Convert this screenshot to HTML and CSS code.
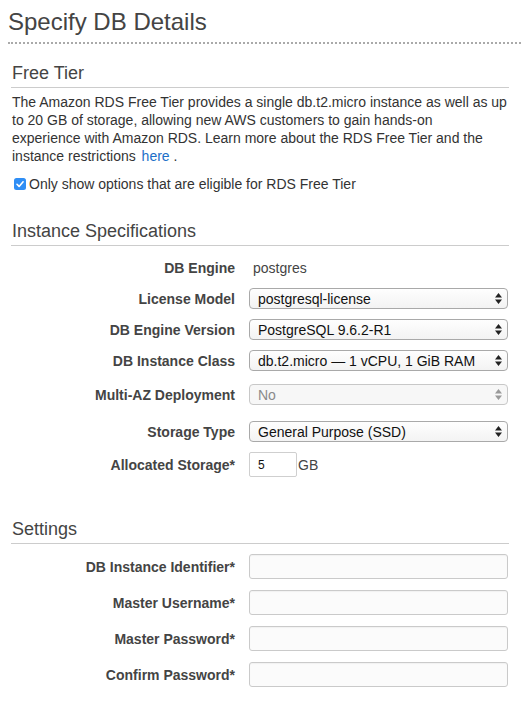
FILE: index.html
```html
<!DOCTYPE html>
<html>
<head>
<meta charset="utf-8">
<link rel="stylesheet" href="styles.css">
</head>
<body>
<h1 class="page-title">Specify DB Details</h1>

<section class="section">
  <h3 class="section-title first">Free Tier</h3>
  <p class="intro">The Amazon RDS Free Tier provides a single db.t2.micro instance as well as up<br>to 20 GB of storage, allowing new AWS customers to gain hands-on<br>experience with Amazon RDS. Learn more about the RDS Free Tier and the<br>instance restrictions <a class="link" href="#">here</a> .</p>
  <div class="check-line">
    <span class="checkbox"><svg width="12" height="12" viewBox="0 0 12 12"><rect x="0" y="0" width="12" height="12" rx="2.5" fill="#2f8ef5"/><path d="M3 6.3 L5.1 8.4 L9.1 3.8" fill="none" stroke="#fff" stroke-width="1.6" stroke-linecap="round" stroke-linejoin="round"/></svg></span>
    <span>Only show options that are eligible for RDS Free Tier</span>
  </div>

  <h3 class="section-title specs">Instance Specifications</h3>
  <div class="form">
    <div class="row row-text">
      <div class="label">DB Engine</div>
      <div class="value plain">postgres</div>
    </div>
    <div class="row">
      <div class="label">License Model</div>
      <div class="select"><span>postgresql-license</span><svg class="arrows" width="7" height="11" viewBox="0 0 7 11"><path d="M0 4.5 L3.5 0 L7 4.5 Z M0 6.5 L7 6.5 L3.5 11 Z" fill="#222"/></svg></div>
    </div>
    <div class="row">
      <div class="label">DB Engine Version</div>
      <div class="select"><span>PostgreSQL 9.6.2-R1</span><svg class="arrows" width="7" height="11" viewBox="0 0 7 11"><path d="M0 4.5 L3.5 0 L7 4.5 Z M0 6.5 L7 6.5 L3.5 11 Z" fill="#222"/></svg></div>
    </div>
    <div class="row">
      <div class="label">DB Instance Class</div>
      <div class="select"><span>db.t2.micro — 1 vCPU, 1 GiB RAM</span><svg class="arrows" width="7" height="11" viewBox="0 0 7 11"><path d="M0 4.5 L3.5 0 L7 4.5 Z M0 6.5 L7 6.5 L3.5 11 Z" fill="#222"/></svg></div>
    </div>
    <div class="row row-multi">
      <div class="label">Multi-AZ Deployment</div>
      <div class="select disabled"><span>No</span><svg class="arrows" width="7" height="11" viewBox="0 0 7 11"><path d="M0 4.5 L3.5 0 L7 4.5 Z M0 6.5 L7 6.5 L3.5 11 Z" fill="#9a9a9a"/></svg></div>
    </div>
    <div class="row row-type">
      <div class="label">Storage Type</div>
      <div class="select"><span>General Purpose (SSD)</span><svg class="arrows" width="7" height="11" viewBox="0 0 7 11"><path d="M0 4.5 L3.5 0 L7 4.5 Z M0 6.5 L7 6.5 L3.5 11 Z" fill="#222"/></svg></div>
    </div>
    <div class="row row-storage">
      <div class="label">Allocated Storage*</div>
      <div class="value"><span class="num-input">5</span><span class="unit">GB</span></div>
    </div>
  </div>

  <h3 class="section-title settings">Settings</h3>
  <div class="form form-settings">
    <div class="row row-input">
      <div class="label">DB Instance Identifier*</div>
      <div class="text-input"></div>
    </div>
    <div class="row row-input">
      <div class="label">Master Username*</div>
      <div class="text-input"></div>
    </div>
    <div class="row row-input">
      <div class="label">Master Password*</div>
      <div class="text-input"></div>
    </div>
    <div class="row row-input">
      <div class="label">Confirm Password*</div>
      <div class="text-input"></div>
    </div>
  </div>
</section>
</body>
</html>
```

FILE: styles.css
```css
html, body {
  margin: 0;
  padding: 0;
  background: #fff;
}
body {
  font-family: "Liberation Sans", Arial, Helvetica, sans-serif;
  font-size: 14px;
  color: #333;
}
.page-title {
  margin: 0 0 0 8px;
  padding: 8px 0 6px 0;
  font-size: 24px;
  line-height: 28px;
  font-weight: normal;
  color: #444;
  border-bottom: 2px dotted #aaa;
}
.section {
  width: 498px;
  margin-left: 11px;
}
.section-title {
  margin: 0;
  padding: 0 0 3px 1px;
  font-size: 18px;
  line-height: 22px;
  font-weight: normal;
  color: #444;
  border-bottom: 1px solid #ccc;
}
.section-title.first { margin-top: 18px; }
.section-title.specs { margin-top: 27px; }
.section-title.settings { margin-top: 41px; }
.intro {
  margin: 5px 0 0 1px;
  line-height: 18px;
  font-size: 14px;
  color: #333;
  white-space: nowrap;
}
.link {
  color: #1d6fc8;
  text-decoration: none;
  margin-left: 2px;
}
.check-line {
  margin-top: 10px;
  display: flex;
  align-items: center;
  height: 18px;
  padding-left: 3px;
  gap: 3px;
}
.checkbox {
  display: flex;
  width: 12px;
  height: 12px;
}
.form {
  margin-top: 12px;
  display: flex;
  flex-direction: column;
  gap: 10px;
}
.row {
  display: grid;
  grid-template-columns: 224px 259px;
  column-gap: 14px;
  align-items: center;
  height: 21px;
}
.row-text { height: 20px; }
.row-multi { margin-top: 3px; }
.row-type { margin-top: 6px; }
.row-storage { height: 25px; }
.label {
  text-align: right;
  font-weight: bold;
  font-size: 14px;
  color: #444;
  white-space: nowrap;
}
.plain {
  color: #444;
  padding-left: 4px;
}
.select {
  box-sizing: border-box;
  height: 21px;
  border: 1px solid #a9a9a9;
  border-radius: 4px;
  background: linear-gradient(#fefefe, #f3f3f3);
  display: flex;
  align-items: center;
  justify-content: space-between;
  padding: 0 5px 0 8px;
  font-size: 14px;
  color: #111;
  white-space: nowrap;
}
.select.disabled {
  border-color: #c8c8c8;
  color: #8a8a8a;
  background: #f7f7f7;
}
.value {
  display: flex;
  align-items: center;
}
.num-input {
  box-sizing: border-box;
  width: 48px;
  height: 25px;
  border: 1px solid #cfcfcf;
  border-radius: 2px;
  display: flex;
  align-items: center;
  padding-left: 8px;
  font-size: 12px;
  color: #111;
}
.unit {
  margin-left: 1px;
  color: #444;
  font-size: 14px;
}
.form-settings {
  margin-top: 10px;
  gap: 11px;
}
.row-input { height: 25px; }
.text-input {
  box-sizing: border-box;
  height: 25px;
  border: 1px solid #cacaca;
  border-radius: 3px;
  background: #fbfbfb;
  box-shadow: inset 0 1px 1px rgba(0,0,0,0.04);
}
```
